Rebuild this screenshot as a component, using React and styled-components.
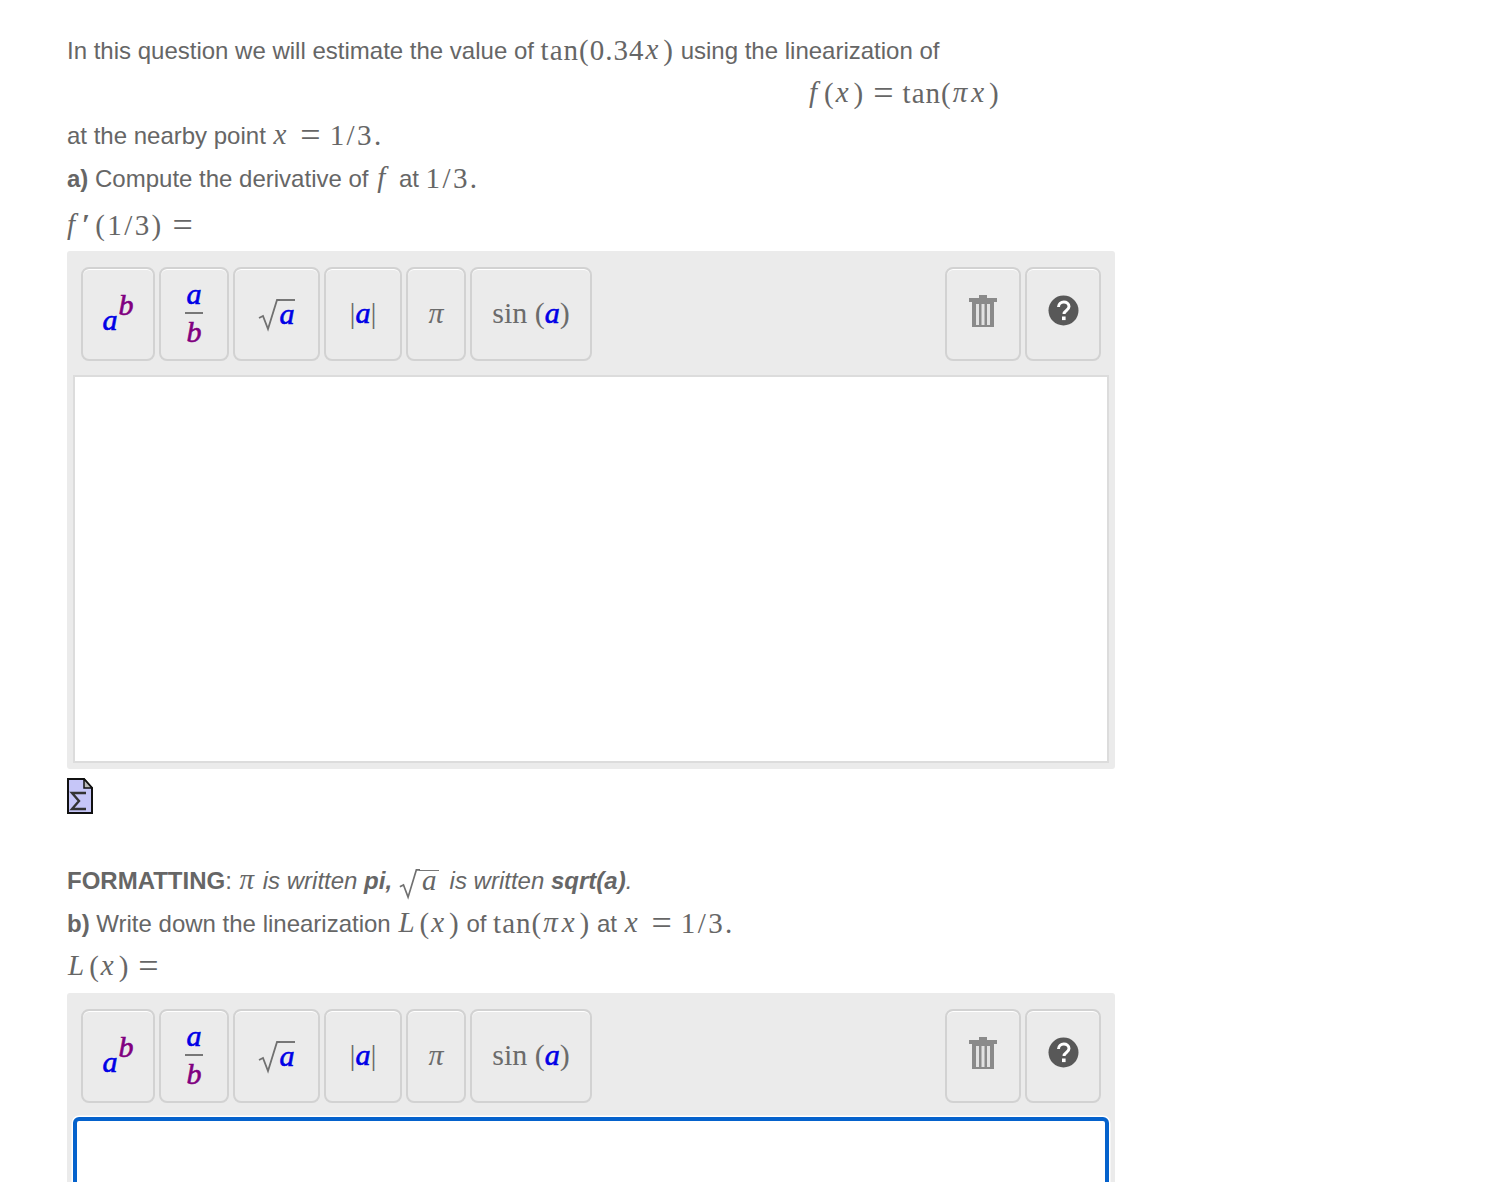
import React from "react";
import styled, { createGlobalStyle } from "styled-components";

const Global = createGlobalStyle`
  html, body { margin: 0; padding: 0; background: #fff; }
  body { font-family: "Liberation Sans", Arial, sans-serif; color: #666; }
  #root { height: 1182px; overflow: hidden; }
`;

const Page = styled.main`
  width: 1048px;
  padding: 30px 0 0 67px;
  font-size: 24px;
`;

const Line = styled.div`
  height: ${(p) => p.$h || 42.67}px;
  line-height: ${(p) => p.$h || 42.67}px;
  white-space: nowrap;
`;

const Display = styled(Line)`
  padding-left: 742px;
`;

const M = styled.span`
  font-family: "Liberation Serif", "Times New Roman", serif;
  font-size: 29px;
  line-height: 0;
  letter-spacing: 1px;
  vertical-align: -1px;
`;

const N = styled(M)`
  letter-spacing: 2.4px;
`;

const I = styled.span`
  font-family: "Liberation Serif", "Times New Roman", serif;
  font-style: italic;
  font-size: 29px;
  line-height: 0;
  letter-spacing: 4px;
  margin: 0 1px;
`;

const Pi = styled(I)`
  letter-spacing: 1px;
`;

const F = styled(I)`
  margin: 0 3px 0 ${(p) => p.$ml || 0}px;
`;

const Op = styled.span`
  font-family: "Liberation Serif", "Times New Roman", serif;
  font-size: 36px;
  line-height: 0;
  margin: 0 9px;
  vertical-align: -3px;
`;

const Prime = styled.span`
  font-family: "Liberation Serif", "Times New Roman", serif;
  font-weight: 700;
  font-size: 29px;
  line-height: 0;
  margin-right: 5px;
`;

const Panel = styled.section`
  background: #ebebeb;
  border-radius: 3px;
  padding: 16px 6px 6px;
  margin-top: ${(p) => p.$mt}px;
  box-sizing: border-box;
`;

const Toolbar = styled.div`
  display: flex;
  gap: 4px;
  padding: 0 8px;
  height: 94px;
  margin-bottom: 14px;
`;

const Spacer = styled.div`
  flex: 1;
`;

const Tool = styled.div`
  box-sizing: border-box;
  width: ${(p) => p.$w}px;
  height: 94px;
  border: 2px solid #d2d2d2;
  border-radius: 8px;
  box-shadow: inset 0 1px 0 #fff;
  display: flex;
  align-items: center;
  justify-content: center;
  font-family: "Liberation Serif", "Times New Roman", serif;
  font-size: 30px;
  color: #6b6b6b;
  white-space: nowrap;
  padding-bottom: ${(p) => p.$pb ?? 2}px;
`;

const Blue = styled.span`
  color: #0000e6;
  font-style: italic;
  -webkit-text-stroke: 0.6px #0000e6;
`;

const Purple = styled.span`
  color: #800080;
  font-style: italic;
  -webkit-text-stroke: 0.6px #800080;
`;

const Sup = styled(Purple)`
  font-size: 30px;
  position: relative;
  top: -8px;
`;

const PowerBase = styled(Blue)`
  position: relative;
  top: 7px;
  margin-right: 1px;
`;

const Frac = styled.div`
  display: flex;
  flex-direction: column;
  align-items: center;
  line-height: 32px;
  font-size: 30px;
`;

const FracBar = styled.div`
  width: 18px;
  height: 2px;
  background: #777;
  margin: 2px 0;
`;

const Over = styled.span`
  border-top: 2px solid #777;
  line-height: 26px;
  display: inline-block;
  margin-left: -1px;
`;

const Root = styled.div`
  display: flex;
  align-items: center;
  margin-left: -2px;
`;

const Answer = styled.div`
  box-sizing: border-box;
  background: #fff;
  height: ${(p) => (p.$focus ? 200 : 388)}px;
  border: ${(p) => (p.$focus ? "4px solid #0562cc" : "2px solid #dcdcdc")};
  border-radius: ${(p) => (p.$focus ? 6 : 0)}px;
  box-shadow: ${(p) => (p.$focus ? "0 0 0 1.5px #fff" : "none")};
`;

const DocIcon = styled.svg`
  display: block;
  margin: 9px 0 0;
`;

const FormatLine = styled(Line)`
  margin-top: 45.5px;
`;

const RadicalSvg = styled.svg`
  flex: none;
  margin-top: ${(p) => p.$mt}px;
`;

const Radical = ({ w = 24, h = 34, mt = 4 }) => (
  <RadicalSvg $mt={mt} width={w} height={h} viewBox="0 0 24 34" preserveAspectRatio="none">
    <path d="M2 20 L6 18 L11 31 L20 2 L24 2" fill="none" stroke="#707070" strokeWidth="1.8" />
  </RadicalSvg>
);

const Trash = () => (
  <svg width="28" height="32" viewBox="0 0 28 32">
    <path d="M10 0h8v3h-8z" fill="#8a8a8a" />
    <rect x="0" y="3" width="28" height="4" fill="#8a8a8a" />
    <path d="M3 7h22v25H3z" fill="#8a8a8a" />
    <path d="M7 9h3v21H7zM12.5 9h3v21h-3zM18 9h3v21h-3z" fill="#e2e2e2" />
  </svg>
);

const Help = () => (
  <svg width="31" height="31" viewBox="0 0 31 31">
    <circle cx="15.5" cy="15.5" r="15" fill="#585858" />
    <path d="M10.5 12c0-6.5 10.5-6.5 10.5-.5 0 4-5 3.8-5 7.5" fill="none" stroke="#fff" strokeWidth="3" />
    <rect x="14" y="21.5" width="3.6" height="3.6" fill="#fff" />
  </svg>
);

const Tools = () => (
  <Toolbar>
    <Tool $w={74}>
      <PowerBase>a</PowerBase>
      <Sup>b</Sup>
    </Tool>
    <Tool $w={70}>
      <Frac>
        <Blue>a</Blue>
        <FracBar />
        <Purple>b</Purple>
      </Frac>
    </Tool>
    <Tool $w={87}>
      <Root>
        <Radical />
        <Over>
          <Blue>a</Blue>
        </Over>
      </Root>
    </Tool>
    <Tool $w={78}>
      |<Blue>a</Blue>|
    </Tool>
    <Tool $w={60}>
      <i>π</i>
    </Tool>
    <Tool $w={122}>
      sin&nbsp;(<Blue>a</Blue>)
    </Tool>
    <Spacer />
    <Tool $w={76} $pb={6}>
      <Trash />
    </Tool>
    <Tool $w={76} $pb={6}>
      <Help />
    </Tool>
  </Toolbar>
);

const InlineRoot = styled.span`
  display: inline-flex;
  align-items: flex-start;
  height: 0;
  margin: 0 11px 0 6px;
  vertical-align: -11px;
`;

const InlineOver = styled(I)`
  border-top: 1.5px solid #777;
  line-height: 18px;
  letter-spacing: 2px;
  padding-left: 3px;
  margin: 2px 0 0 -1px;
`;

const Ital = styled.em`
  font-style: italic;
`;

export default function App() {
  return (
    <Page>
      <Global />
      <Line>
        In this question we will estimate the value of <M>tan(0.34</M>
        <I>x</I>
        <M>)</M> using the linearization of
      </Line>
      <Display>
        <F>f</F>
        <M>(</M>
        <I>x</I>
        <M>)</M>
        <Op>=</Op>
        <M>tan(</M>
        <I>πx</I>
        <M>)</M>
      </Display>
      <Line>
        at the nearby point <I>x</I>
        <Op>=</Op>
        <N>1/3.</N>
      </Line>
      <Line>
        <b>a)</b> Compute the derivative of <F $ml={2}>f</F> at <N>1/3.</N>
      </Line>
      <Line $h={50}>
        <F>f</F>
        <Prime>′</Prime>
        <N>(1/3)</N>
        <Op>=</Op>
      </Line>
      <Panel $mt={0}>
        <Tools />
        <Answer />
      </Panel>
      <DocIcon width="26" height="36" viewBox="0 0 26 36">
        <path d="M1 1h16l8 9v25H1z" fill="#c6c6f8" stroke="#111" strokeWidth="2" />
        <path d="M17 1v9h8z" fill="#bbb" stroke="#111" strokeWidth="1.5" />
        <path d="M19 15H5l7 8-7 8h14" fill="none" stroke="#333" strokeWidth="2.4" />
      </DocIcon>
      <FormatLine $h={44}>
        <b>FORMATTING</b>: <Pi>π</Pi>{" "}
        <Ital>
          is written <b>pi,</b>
        </Ital>
        <InlineRoot>
          <Radical w={22} h={32} mt={0} />
          <InlineOver>a</InlineOver>
        </InlineRoot>
        <Ital>
          is written <b>sqrt(a)</b>.
        </Ital>
      </FormatLine>
      <Line>
        <b>b)</b> Write down the linearization <I>L</I>
        <M>(</M>
        <I>x</I>
        <M>)</M> of <M>tan(</M>
        <I>πx</I>
        <M>)</M> at <I>x</I>
        <Op>=</Op>
        <N>1/3.</N>
      </Line>
      <Line>
        <I>L</I>
        <M>(</M>
        <I>x</I>
        <M>)</M>
        <Op>=</Op>
      </Line>
      <Panel $mt={4.16}>
        <Tools />
        <Answer $focus />
      </Panel>
    </Page>
  );
}
